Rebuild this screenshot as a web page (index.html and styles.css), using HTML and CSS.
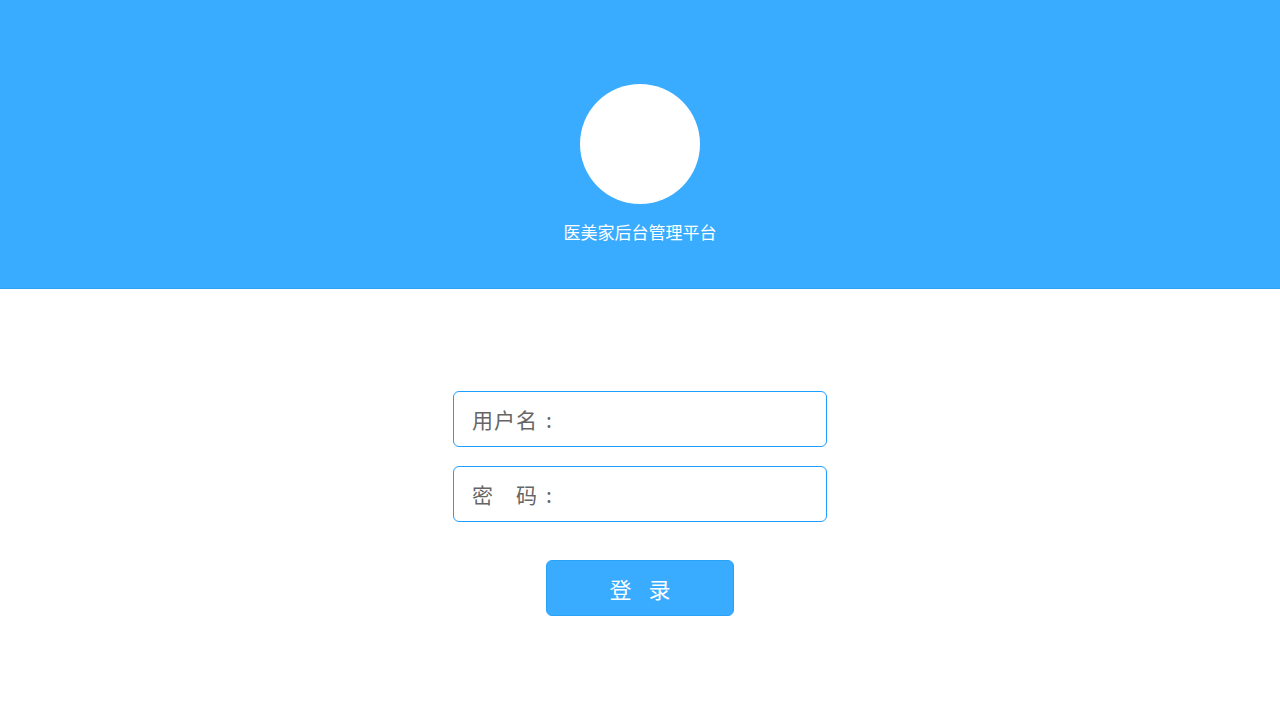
FILE: index.html
```html
<!DOCTYPE html>
<html lang="zh">
<head>
<meta charset="utf-8">
<title>医美家后台管理平台</title>
<link rel="stylesheet" href="styles.css">
</head>
<body>
<header class="banner">
  <div class="avatar"></div>
  <div class="title">医美家后台管理平台</div>
</header>
<main class="login">
  <form class="form">
    <label class="field"><span class="label">用户名</span><span class="colon">:</span><input class="input" type="text"></label>
    <label class="field"><span class="label">密<span class="gap"></span>码</span><span class="colon">:</span><input class="input" type="password"></label>
    <button class="btn" type="button"><span>登</span><span>录</span></button>
  </form>
</main>
</body>
</html>
```
FILE: styles.css
```css
* { box-sizing: border-box; }
html, body { margin: 0; padding: 0; background: #fff; }
body { font-family: "Noto Sans CJK SC", "Liberation Sans", sans-serif; width: 1280px; height: 720px; overflow: hidden; }
.banner {
  height: 289px;
  background: #39acff;
  border-bottom: 1px solid #30a3f5;
  display: flex;
  flex-direction: column;
  align-items: center;
  padding-top: 84px;
}
.avatar {
  width: 120px; height: 120px;
  border-radius: 50%;
  background: #fff;
}
.title {
  margin-top: 16px;
  color: #fff;
  font-size: 17px;
  line-height: 24px;
}
.login { display: flex; justify-content: center; padding-top: 102px; }
.form { display: flex; flex-direction: column; align-items: center; }
.field {
  width: 374px; height: 56px;
  border: 1px solid #1e9fff;
  border-radius: 6px;
  display: flex;
  align-items: center;
  padding-left: 18px;
  margin-bottom: 19px;
  background: #fff;
}
.field + .field { margin-bottom: 38px; }
.label { color: #666; font-size: 21px; white-space: nowrap; display: inline-flex; letter-spacing: 1px; }
.gap { display: inline-block; width: 22px; }
.colon { color: #666; font-size: 21px; margin-left: 8px; margin-right: 8px; }
.input { flex: 1; border: 0; outline: none; height: 100%; background: transparent; font-size: 18px; }
.btn {
  width: 188px; height: 56px;
  background: #39acff;
  border: 1px solid #2aa2f8;
  border-radius: 6px;
  color: #fff;
  font-size: 22px;
  font-family: inherit;
  padding: 0;
  display: flex;
  align-items: center;
  justify-content: center;
  gap: 17px;
}
```
